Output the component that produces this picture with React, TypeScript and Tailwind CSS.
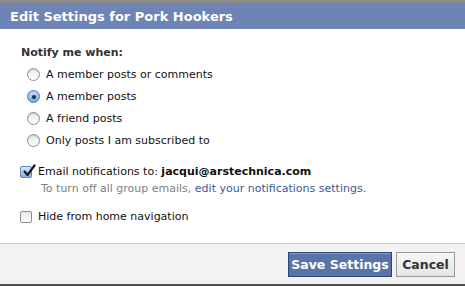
const Radio = ({ checked }: { checked?: boolean }) => (
  <span
    className={`flex h-[13px] w-[13px] shrink-0 items-center justify-center rounded-full border ${
      checked
        ? "border-[#4a7bbd] bg-gradient-to-b from-[#cfe3fb] to-[#6fa4e6]"
        : "border-[#8f8f8f] bg-gradient-to-b from-[#e9e9e9] to-white"
    } shadow-[inset_0_1px_1px_rgba(0,0,0,0.15)]`}
  >
    {checked && <span className="h-[4px] w-[4px] rounded-full bg-[#1c2c45]" />}
  </span>
);

const Checkbox = ({ checked }: { checked?: boolean }) => (
  <span
    className={`relative flex h-[12px] w-[12px] shrink-0 items-center justify-center rounded-[2px] border ${
      checked
        ? "border-[#5f86bd] bg-gradient-to-b from-[#d6e6fa] to-[#87b2e8]"
        : "border-[#8f8f8f] bg-gradient-to-b from-[#e9e9e9] to-white"
    }`}
  >
    {checked && (
      <svg
        viewBox="0 0 14 14"
        className="absolute -top-[3px] left-[1px] h-[14px] w-[14px]"
      >
        <path
          d="M2.5 7.5 L5.5 11 L12.5 1.5"
          fill="none"
          stroke="#1b1b1b"
          strokeWidth="2.2"
          strokeLinecap="round"
          strokeLinejoin="round"
        />
      </svg>
    )}
  </span>
);

const options = [
  { label: "A member posts or comments", checked: false },
  { label: "A member posts", checked: true },
  { label: "A friend posts", checked: false },
  { label: "Only posts I am subscribed to", checked: false },
];

export default function App() {
  return (
    <div className="flex h-[286px] w-[465px] flex-col overflow-hidden bg-white font-['DejaVu_Sans',sans-serif] text-[11px] leading-[13px]">
      <div className="h-[3px] shrink-0 bg-[#8a8a88]" />
      <div className="flex h-[26px] shrink-0 items-center bg-[#6d84b4] pl-[10px]">
        <h1 className="text-[13px] font-bold text-white">
          Edit Settings for Pork Hookers
        </h1>
      </div>
      <div className="flex flex-1 flex-col pl-[20px] pt-[17px]">
        <h2 className="pl-[1px] font-bold text-[#333]">Notify me when:</h2>
        <div className="mt-[9px] flex flex-col gap-[9px] pl-[7px]">
          {options.map((opt) => (
            <label key={opt.label} className="flex items-center gap-[6px] text-[#111]">
              <Radio checked={opt.checked} />
              <span>{opt.label}</span>
            </label>
          ))}
        </div>
        <label className="mt-[18px] flex items-center gap-[6px] text-[#111]">
          <Checkbox checked />
          <span>
            Email notifications to: <b>jacqui@arstechnica.com</b>
          </span>
        </label>
        <p className="mt-[4px] pl-[21px] text-[#808080]">
          To turn off all group emails,{" "}
          <a className="text-[#3b5998]">edit your notifications settings.</a>
        </p>
        <label className="mt-[15px] flex items-center gap-[6px] text-[#111]">
          <Checkbox />
          <span>Hide from home navigation</span>
        </label>
      </div>
      <div className="flex h-[41px] shrink-0 items-center justify-end gap-[4px] border-t border-[#cccccc] bg-[#f2f2f2] pr-[10px]">
        <button className="h-[25px] w-[104px] border border-[#29447e] bg-[#5b74a8] text-[12.5px] font-bold text-white shadow-[inset_0_1px_0_#8a9cc2]">
          Save Settings
        </button>
        <button className="h-[25px] w-[59px] border border-[#999] bg-gradient-to-b from-[#f6f6f6] to-[#e6e6e6] text-[12.5px] font-bold text-[#333]">
          Cancel
        </button>
      </div>
      <div className="h-[2px] shrink-0 bg-[#4f4f4f]" />
    </div>
  );
}
